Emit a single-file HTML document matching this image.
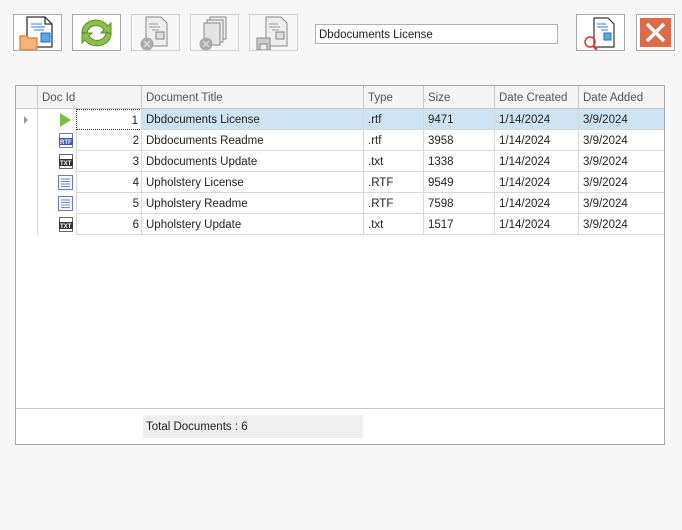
<!DOCTYPE html>
<html><head><style>
*{box-sizing:border-box;margin:0;padding:0}
body{width:682px;height:530px;background:#f7f7f7;font-family:"Liberation Sans",sans-serif;font-size:11.5px;color:#222;position:relative;overflow:hidden}
.btn{position:absolute;top:14px;width:49px;height:37px;border:1px solid #a9a9a9;background:#fff;overflow:hidden}
.btn.dis{border-color:#cfcfcf;background:#f7f7f7}
.btn svg{position:absolute;left:-1px;top:-1px}
#tb{position:absolute;left:315px;top:24px;width:243px;height:20px;border:1px solid #b0b0b0;background:#fff;padding:4px 3px 0;font-size:11.5px}
#grid{position:absolute;left:15px;top:85px;width:650px;height:360px;border:1px solid #a9a9a9;background:#fff}
.hdr{position:absolute;top:0;left:0;width:648px;height:23px;background:#f4f4f4;border-bottom:1px solid #c8c8c8;color:#555}
.hdr div{position:absolute;top:0;height:22px;line-height:24px;padding-left:4px;border-left:1px solid #c8c8c8}
.row{position:absolute;left:0;width:648px;height:21px}
.c{position:absolute;top:0;height:21px;line-height:23px;padding-left:4px;border-bottom:1px solid #d8d8d8;border-left:1px solid #d8d8d8}
.ic{padding:0}
.ic svg{position:absolute;left:-1px;top:0}
.sel .c{background:#cde3f4}
.foot{position:absolute;left:0;top:322px;width:648px;border-top:1px solid #c8c8c8;height:36px}
.tot{position:absolute;left:127px;top:329px;width:220px;height:23px;background:#efefef;line-height:25px;padding-left:3px}
</style></head><body>
<div class="btn" style="left:13px"><svg width="49" height="37"><path d="M14 3h18l7 7v23H14z" fill="#fff" stroke="#333" stroke-width="1.3"/><path d="M32 3v7h7" fill="none" stroke="#333" stroke-width="1.3"/><path d="M18 10h11M18 13h14M21 16h10" stroke="#2a7fd0"/><rect x="28" y="19" width="9" height="9" fill="#5aa8e8" stroke="#2a6fb0"/><path d="M7 22h7l2 2h8v12H7z" fill="#f6b27a" stroke="#e07b28" stroke-width="1.2"/></svg></div>
<div class="btn" style="left:72px"><svg width="49" height="37"><path d="M10 18a14 12 0 0 1 26-6l3-3v10h-10l3-3a9 8 0 0 0-17 4z" fill="#8cc04a" stroke="#5a8a2a"/><path d="M39 20a14 12 0 0 1-26 6l-3 3v-10h10l-3 3a9 8 0 0 0 17-4z" fill="#8cc04a" stroke="#5a8a2a"/></svg></div>
<div class="btn dis" style="left:131px"><svg width="49" height="37"><path d="M15 3h15l6 6v23H15z" fill="#eee" stroke="#888"/><path d="M18 10h9M18 13h11M21 16h7" stroke="#999"/><rect x="25" y="18" width="8" height="7" fill="#ddd" stroke="#888"/><circle cx="16" cy="30" r="6.5" fill="#aaa"/><path d="M13 27l6 6M19 27l-6 6" stroke="#ddd" stroke-width="1.4"/></svg></div>
<div class="btn dis" style="left:190px"><svg width="49" height="37"><rect x="20" y="3" width="16" height="22" fill="#eee" stroke="#888"/><rect x="17" y="6" width="16" height="22" fill="#eee" stroke="#888"/><rect x="14" y="9" width="16" height="22" fill="#e4e4e4" stroke="#888"/><circle cx="16" cy="30" r="6.5" fill="#aaa"/><path d="M13 27l6 6M19 27l-6 6" stroke="#ddd" stroke-width="1.4"/></svg></div>
<div class="btn dis" style="left:249px"><svg width="49" height="37"><path d="M17 3h15l6 6v23H17z" fill="#eee" stroke="#888"/><path d="M20 10h9M20 13h11M23 16h7" stroke="#999"/><rect x="27" y="18" width="8" height="7" fill="#ddd" stroke="#888"/><rect x="8" y="24" width="13" height="12" fill="#ccc" stroke="#888"/><rect x="11" y="30" width="7" height="6" fill="#eee" stroke="#888"/></svg></div>
<div id="tb">Dbdocuments License</div>
<div class="btn" style="left:576px"><svg width="49" height="37"><path d="M18 4h14l6 6v23H18z" fill="#fff" stroke="#333" stroke-width="1.2"/><path d="M21 10h9M21 13h11M25 16h7" stroke="#2a7fd0"/><rect x="28" y="19" width="7" height="7" fill="#5aa8e8" stroke="#2a6fb0"/><circle cx="14" cy="28" r="5" fill="none" stroke="#d33" stroke-width="1.5"/><path d="M17 32l4 4" stroke="#d33" stroke-width="2"/></svg></div>
<div class="btn" style="left:636px;width:39px"><svg width="39" height="37"><rect x="4" y="4" width="31" height="29" fill="#df6a4a"/><path d="M11 10l17 17M28 10l-17 17" stroke="#fff" stroke-width="3.5"/></svg></div>
<div id="grid">
<div class="hdr"><div style="left:0;border:0;width:21px"></div><div style="left:21px">Doc Id</div><div style="left:125px">Document Title</div><div style="left:347px">Type</div><div style="left:407px">Size</div><div style="left:478px">Date Created</div><div style="left:562px">Date Added</div></div>
<div style="position:absolute;left:8px;top:30px;width:0;height:0;border-left:4px solid #999;border-top:4px solid transparent;border-bottom:4px solid transparent"></div>
<div class="row sel" style="top:23px"><div class="c ic" style="left:21px;width:40px;background:#fff;border-bottom:0"><svg width="40" height="20"><path d="M23 4l11 7-11 7z" fill="#7ac142"/></svg></div><div class="c" style="left:60px;width:66px;background:#fff;text-align:right;padding-right:3px;border:1px dotted #333">1</div><div class="c" style="left:125px;width:223px">Dbdocuments License</div><div class="c" style="left:347px;width:61px">.rtf</div><div class="c" style="left:407px;width:72px">9471</div><div class="c" style="left:478px;width:85px">1/14/2024</div><div class="c" style="left:562px;width:86px">3/9/2024</div></div>
<div class="row" style="top:44px"><div class="c ic" style="left:21px;width:40px;border-bottom:0"><svg width="40" height="20"><rect x="22.5" y="3.5" width="13" height="14" fill="#fff" stroke="#6a7bb8"/><rect x="22" y="8" width="14" height="7" fill="#3a5ab0"/><text x="23" y="14" font-size="6" fill="#fff" font-family="Liberation Sans" font-weight="bold">RTF</text></svg></div><div class="c" style="left:60px;width:66px;text-align:right;padding-right:3px">2</div><div class="c" style="left:125px;width:223px">Dbdocuments Readme</div><div class="c" style="left:347px;width:61px">.rtf</div><div class="c" style="left:407px;width:72px">3958</div><div class="c" style="left:478px;width:85px">1/14/2024</div><div class="c" style="left:562px;width:86px">3/9/2024</div></div>
<div class="row" style="top:65px"><div class="c ic" style="left:21px;width:40px;border-bottom:0"><svg width="40" height="20"><rect x="22.5" y="3.5" width="13" height="14" fill="#fff" stroke="#666"/><rect x="22" y="8" width="14" height="7" fill="#333"/><text x="23" y="14" font-size="6" fill="#fff" font-family="Liberation Sans" font-weight="bold">TXT</text></svg></div><div class="c" style="left:60px;width:66px;text-align:right;padding-right:3px">3</div><div class="c" style="left:125px;width:223px">Dbdocuments Update</div><div class="c" style="left:347px;width:61px">.txt</div><div class="c" style="left:407px;width:72px">1338</div><div class="c" style="left:478px;width:85px">1/14/2024</div><div class="c" style="left:562px;width:86px">3/9/2024</div></div>
<div class="row" style="top:86px"><div class="c ic" style="left:21px;width:40px;border-bottom:0"><svg width="40" height="20"><rect x="21.5" y="3.5" width="14" height="14" fill="#f4f7fc" stroke="#6a7bb8"/><path d="M24 7h9M24 9.5h9M24 12h9M24 14.5h9" stroke="#7a8ac0"/></svg></div><div class="c" style="left:60px;width:66px;text-align:right;padding-right:3px">4</div><div class="c" style="left:125px;width:223px">Upholstery License</div><div class="c" style="left:347px;width:61px">.RTF</div><div class="c" style="left:407px;width:72px">9549</div><div class="c" style="left:478px;width:85px">1/14/2024</div><div class="c" style="left:562px;width:86px">3/9/2024</div></div>
<div class="row" style="top:107px"><div class="c ic" style="left:21px;width:40px;border-bottom:0"><svg width="40" height="20"><rect x="21.5" y="3.5" width="14" height="14" fill="#f4f7fc" stroke="#6a7bb8"/><path d="M24 7h9M24 9.5h9M24 12h9M24 14.5h9" stroke="#7a8ac0"/></svg></div><div class="c" style="left:60px;width:66px;text-align:right;padding-right:3px">5</div><div class="c" style="left:125px;width:223px">Upholstery Readme</div><div class="c" style="left:347px;width:61px">.RTF</div><div class="c" style="left:407px;width:72px">7598</div><div class="c" style="left:478px;width:85px">1/14/2024</div><div class="c" style="left:562px;width:86px">3/9/2024</div></div>
<div class="row" style="top:128px"><div class="c ic" style="left:21px;width:40px;border-bottom:0"><svg width="40" height="20"><rect x="22.5" y="3.5" width="13" height="14" fill="#fff" stroke="#666"/><rect x="22" y="8" width="14" height="7" fill="#333"/><text x="23" y="14" font-size="6" fill="#fff" font-family="Liberation Sans" font-weight="bold">TXT</text></svg></div><div class="c" style="left:60px;width:66px;text-align:right;padding-right:3px">6</div><div class="c" style="left:125px;width:223px">Upholstery Update</div><div class="c" style="left:347px;width:61px">.txt</div><div class="c" style="left:407px;width:72px">1517</div><div class="c" style="left:478px;width:85px">1/14/2024</div><div class="c" style="left:562px;width:86px">3/9/2024</div></div>
<div class="foot"></div>
<div class="tot">Total Documents : 6</div>
</div>
</body></html>
